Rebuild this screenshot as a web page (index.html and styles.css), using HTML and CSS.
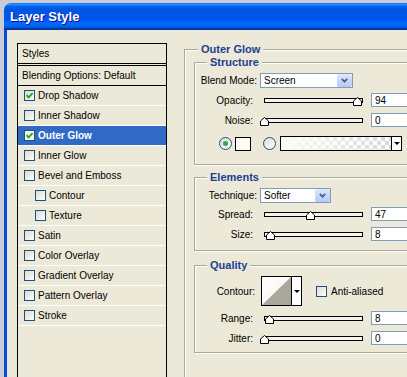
FILE: index.html
```html
<!DOCTYPE html>
<html lang="en">
<head>
  <meta charset="UTF-8">
  <title>Layer Style</title>
  <link rel="stylesheet" href="styles.css">
</head>
<body>

  <div class="window">
    <div class="titlebar">Layer Style</div>
    <div class="frame">

      <div class="styles-list">
        <div class="item head">Styles</div>
        <div class="item blend">Blending Options: Default</div>
        <div class="item"><span class="cb on"><svg viewBox="0 0 9 9"><path d="M1.5 4.2 L3.6 6.4 L7.6 2.2"/></svg></span>Drop Shadow</div>
        <div class="item"><span class="cb"></span>Inner Shadow</div>
        <div class="item sel"><span class="cb on"><svg viewBox="0 0 9 9"><path d="M1.5 4.2 L3.6 6.4 L7.6 2.2"/></svg></span>Outer Glow</div>
        <div class="item"><span class="cb"></span>Inner Glow</div>
        <div class="item"><span class="cb"></span>Bevel and Emboss</div>
        <div class="item sub"><span class="cb"></span>Contour</div>
        <div class="item sub"><span class="cb"></span>Texture</div>
        <div class="item"><span class="cb"></span>Satin</div>
        <div class="item"><span class="cb"></span>Color Overlay</div>
        <div class="item"><span class="cb"></span>Gradient Overlay</div>
        <div class="item"><span class="cb"></span>Pattern Overlay</div>
        <div class="item"><span class="cb"></span>Stroke</div>
      </div>

      <fieldset class="panel">
        <legend>Outer Glow</legend>

        <fieldset class="group structure">
          <legend>Structure</legend>
          <div class="row combo-row">
            <span class="lbl">Blend Mode:</span>
            <div class="combo wide"><span>Screen</span><span class="drop"><svg viewBox="0 0 7 5"><path d="M0.8 0.8 L3.5 3.6 L6.2 0.8"/></svg></span></div>
          </div>
          <div class="row slider-row first">
            <span class="lbl">Opacity:</span>
            <div class="track"><span class="thumb" style="left:96%"><svg viewBox="0 0 9 9"><polygon points="0.5,8.5 0.5,4 4.5,0.5 8.5,4 8.5,8.5"/></svg></span></div>
            <input class="num" type="text" value="94">
          </div>
          <div class="row slider-row">
            <span class="lbl">Noise:</span>
            <div class="track"><span class="thumb" style="left:0%"><svg viewBox="0 0 9 9"><polygon points="0.5,8.5 0.5,4 4.5,0.5 8.5,4 8.5,8.5"/></svg></span></div>
            <input class="num" type="text" value="0">
          </div>
          <div class="row color-row">
            <span class="radio on"></span>
            <span class="swatch"></span>
            <span class="radio second"></span>
            <div class="gradient"><span class="fill"></span><span class="arrow"></span></div>
          </div>
        </fieldset>

        <fieldset class="group elements">
          <legend>Elements</legend>
          <div class="row combo-row">
            <span class="lbl">Technique:</span>
            <div class="combo narrow"><span>Softer</span><span class="drop"><svg viewBox="0 0 7 5"><path d="M0.8 0.8 L3.5 3.6 L6.2 0.8"/></svg></span></div>
          </div>
          <div class="row slider-row">
            <span class="lbl">Spread:</span>
            <div class="track"><span class="thumb" style="left:47%"><svg viewBox="0 0 9 9"><polygon points="0.5,8.5 0.5,4 4.5,0.5 8.5,4 8.5,8.5"/></svg></span></div>
            <input class="num" type="text" value="47">
          </div>
          <div class="row slider-row">
            <span class="lbl">Size:</span>
            <div class="track"><span class="thumb" style="left:6%"><svg viewBox="0 0 9 9"><polygon points="0.5,8.5 0.5,4 4.5,0.5 8.5,4 8.5,8.5"/></svg></span></div>
            <input class="num" type="text" value="8">
          </div>
        </fieldset>

        <fieldset class="group quality">
          <legend>Quality</legend>
          <div class="row contour-row">
            <span class="lbl">Contour:</span>
            <div class="contour">
              <svg viewBox="0 0 29 28"><polygon points="0,28 29,0 29,28"/></svg>
              <span class="arrow"></span>
            </div>
            <span class="cb aa"></span>
            <span>Anti-aliased</span>
          </div>
          <div class="row slider-row first">
            <span class="lbl">Range:</span>
            <div class="track"><span class="thumb" style="left:5%"><svg viewBox="0 0 9 9"><polygon points="0.5,8.5 0.5,4 4.5,0.5 8.5,4 8.5,8.5"/></svg></span></div>
            <input class="num" type="text" value="8">
          </div>
          <div class="row slider-row">
            <span class="lbl">Jitter:</span>
            <div class="track"><span class="thumb" style="left:0%"><svg viewBox="0 0 9 9"><polygon points="0.5,8.5 0.5,4 4.5,0.5 8.5,4 8.5,8.5"/></svg></span></div>
            <input class="num" type="text" value="0">
          </div>
        </fieldset>
      </fieldset>

    </div>
  </div>

</body>
</html>
```

FILE: styles.css
```css
body {
  margin: 0;
  width: 407px;
  height: 377px;
  overflow: hidden;
  background-color: #c9ccd3;
  font-family: "Liberation Sans", Arial, sans-serif;
  font-size: 10px;
  color: #000;
}
.window {
  margin: 3px 0 0 4px;
  width: 450px;
}
.titlebar {
  height: 27px;
  line-height: 27px;
  padding-left: 6px;
  border-radius: 7px 0 0 0;
  color: #fff;
  font-size: 13px;
  font-weight: bold;
  text-shadow: 1px 1px #0f1089;
  background: linear-gradient(to bottom, #0058ee 0%, #3593ff 4%, #288eff 6%, #127dff 8%, #036ffc 10%, #0262ee 14%, #0057e5 20%, #0054e3 24%, #0055eb 56%, #005bf5 66%, #026afe 76%, #0062ef 86%, #0052d6 92%, #0040ab 94%, #003092 100%);
}
.frame {
  display: flex;
  gap: 17px;
  height: 400px;
  padding: 13px 0 0 10px;
  background-color: #ece9d8;
  border-left: 3px solid #0a4ad8;
}

/* styles list */
.styles-list {
  flex: none;
  width: 148px;
  height: 360px;
  border: 1px solid #000;
}
.item {
  display: flex;
  align-items: center;
  height: 19px;
  padding-left: 6px;
  border-bottom: 1px solid #fff;
  white-space: nowrap;
}
.item.head {
  padding-left: 4px;
  border-bottom: 3px double #000;
}
.item.blend {
  padding-left: 4px;
  border-bottom-color: #000;
}
.item.sub {
  padding-left: 17px;
}
.item.sel {
  background-color: #316ac5;
  color: #fff;
  font-weight: bold;
}
.cb {
  flex: none;
  display: inline-flex;
  width: 9px;
  height: 9px;
  margin-right: 3px;
  border: 1px solid #1c5180;
  background: linear-gradient(135deg, #dcdcd4, #fdfdfb);
}
.cb svg {
  width: 9px;
  height: 9px;
}
.cb svg path {
  fill: none;
  stroke: #21a121;
  stroke-width: 1.7;
}
.item.sel .cb {
  background: #f4f6ee;
}

/* right side */
fieldset {
  margin: 0;
  min-width: 0;
  border: 1px solid #aca899;
  box-shadow: inset 1px 1px #fff, 1px 1px #fff;
}
legend {
  padding: 0 3px;
  font-size: 11px;
  font-weight: bold;
  line-height: 13px;
  color: #1b3f93;
  background-color: #ece9d8;
}
.panel {
  flex: none;
  width: 260px;
  padding: 0 0 40px 9px;
}
.panel > legend {
  margin-left: 4px;
}
.group {
  padding: 4px 0 13px 0;
}
.group legend {
  margin-left: 12px;
}
.elements {
  margin-top: 6px;
  padding-bottom: 6px;
}
.quality {
  margin-top: 8px;
  padding-bottom: 4px;
}

.row {
  display: flex;
  align-items: center;
  height: 20px;
  white-space: nowrap;
}
.lbl {
  flex: none;
  text-align: right;
}
.combo-row {
  height: 15px;
}
.combo-row .lbl {
  width: 62px;
  margin-right: 3px;
}
.slider-row .lbl {
  width: 58px;
  margin-right: 11px;
}
.slider-row.first {
  margin-top: 2px;
}
.elements .slider-row.first,
.elements .combo-row + .slider-row {
  margin-top: 1px;
}

.combo {
  display: flex;
  align-items: center;
  height: 15px;
  box-sizing: border-box;
  padding-left: 3px;
  border: 1px solid #7f9db9;
  background-color: #fff;
}
.combo.wide {
  width: 93px;
}
.combo.narrow {
  width: 71px;
}
.combo .drop {
  display: flex;
  align-items: center;
  justify-content: center;
  width: 15px;
  height: 13px;
  margin-left: auto;
  border-radius: 2px;
  background: linear-gradient(#dde7fd, #b5c9f7);
}
.combo .drop svg {
  width: 7px;
  height: 5px;
}
.combo .drop path {
  fill: none;
  stroke: #4d6185;
  stroke-width: 1.8;
}

.track {
  position: relative;
  flex: none;
  width: 97px;
  height: 3px;
  margin-right: 8px;
  border: 1px solid #000;
  background-color: #f3f2ec;
}
.thumb {
  position: absolute;
  top: -2px;
  width: 9px;
  height: 9px;
  margin-left: -5px;
}
.thumb svg {
  display: block;
  width: 9px;
  height: 9px;
}
.thumb polygon {
  fill: #fff;
  stroke: #000;
  stroke-width: 1;
}
.num {
  width: 40px;
  height: 14px;
  box-sizing: border-box;
  padding: 0 3px;
  border: 1px solid #7f9db9;
  font-family: "Liberation Sans", Arial, sans-serif;
  font-size: 10px;
  color: #000;
  background-color: #fff;
}

.color-row {
  height: 15px;
  margin-top: 6px;
  padding-left: 24px;
}
.radio {
  flex: none;
  display: flex;
  align-items: center;
  justify-content: center;
  width: 11px;
  height: 11px;
  border: 1px solid #1c5180;
  border-radius: 50%;
  background: linear-gradient(135deg, #dcdcd4, #fdfdfb);
}
.radio.on::after {
  content: "";
  width: 5px;
  height: 5px;
  border-radius: 50%;
  background-color: #3da53d;
}
.radio.second {
  margin-left: 12px;
}
.swatch {
  width: 14px;
  height: 12px;
  margin-left: 3px;
  border: 1px solid #000;
  background-color: #fcfcf4;
}
.gradient {
  display: flex;
  width: 122px;
  height: 15px;
  box-sizing: border-box;
  margin-left: 4px;
  border: 1px solid #000;
}
.gradient .fill {
  flex: 1;
  background: linear-gradient(to right, #fcfcf6 0%, rgba(255, 255, 255, 0) 100%), repeating-conic-gradient(#d8d8d8 0 25%, #fff 0 50%) 0 0 / 8px 8px;
}
.arrow {
  display: flex;
  align-items: center;
  justify-content: center;
  width: 9px;
  border-left: 1px solid #000;
  background-color: #fff;
}
.arrow::after {
  content: "";
  border-left: 3px solid transparent;
  border-right: 3px solid transparent;
  border-top: 3px solid #000;
}

.contour-row {
  height: 30px;
  margin-top: 0;
}
.contour-row .lbl {
  width: 60px;
  margin-right: 6px;
}
.contour {
  display: flex;
  width: 41px;
  height: 30px;
  box-sizing: border-box;
  border: 1px solid #000;
  background: linear-gradient(135deg, #fff, #f1f0ea);
}
.contour svg {
  width: 29px;
  height: 28px;
}
.contour polygon {
  fill: #aaa89c;
}
.contour .arrow {
  flex: 1;
}
.cb.aa {
  margin-left: 14px;
  margin-right: 4px;
}
```
